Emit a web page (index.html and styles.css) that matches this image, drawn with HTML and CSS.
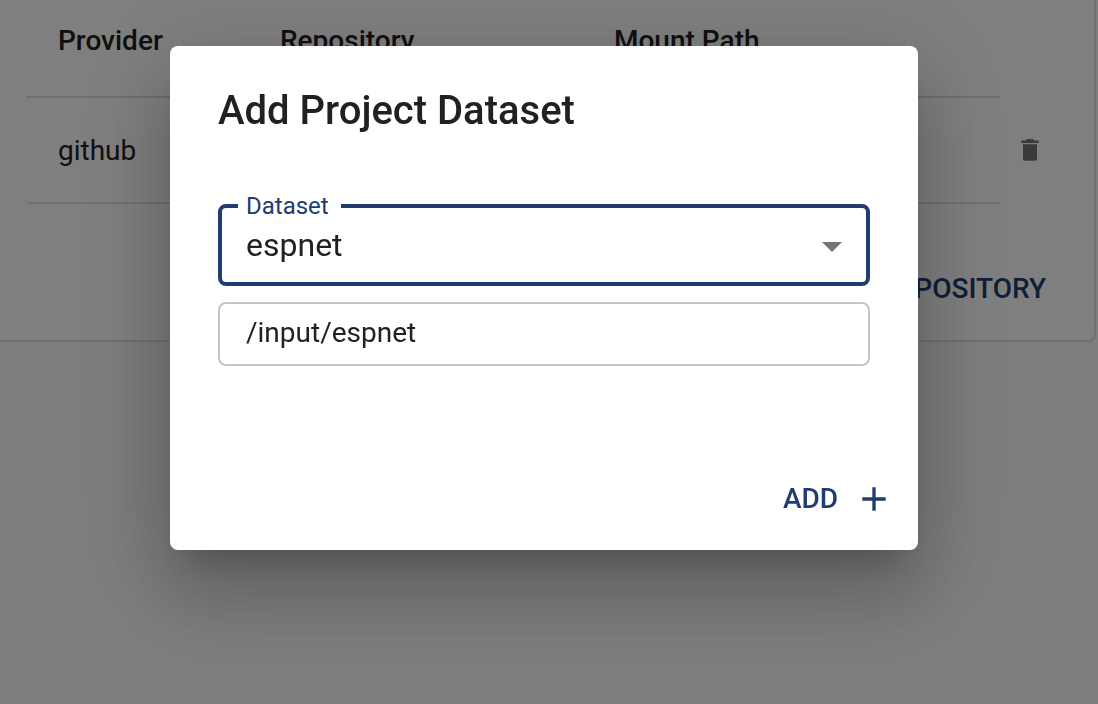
FILE: index.html
```html
<!DOCTYPE html>
<html lang="en">
<head>
  <meta charset="utf-8">
  <meta name="viewport" content="width=device-width, initial-scale=1">
  <title>Add Project Dataset</title>
  <link rel="stylesheet" href="styles.css">
</head>
<body>
  <main class="page" inert>
    <section class="card">
      <table class="repos">
        <colgroup>
          <col class="col-provider">
          <col class="col-repository">
          <col class="col-path">
          <col class="col-actions">
        </colgroup>
        <thead>
          <tr>
            <th scope="col">Provider</th>
            <th scope="col">Repository</th>
            <th scope="col">Mount Path</th>
            <td class="actions"></td>
          </tr>
        </thead>
        <tbody>
          <tr>
            <td>github</td>
            <td></td>
            <td></td>
            <td class="actions">
              <button class="icon-button" type="button" aria-label="Delete repository">
                <svg width="20" height="24" viewBox="0 0 20 24" fill="currentColor" aria-hidden="true">
                  <path d="M7 1h6l1.500 1.500H18.700V5H1.300V2.500H5.500zM3 6.200h14v14.800a1.700 1.700 0 0 1-1.700 1.700H4.700A1.700 1.700 0 0 1 3 21z"/>
                </svg>
              </button>
            </td>
          </tr>
        </tbody>
      </table>
      <div class="card-footer">
        <button class="text-button" type="button">ADD REPOSITORY</button>
      </div>
    </section>
  </main>

  <div class="backdrop">
    <form class="dialog" role="dialog" aria-modal="true" aria-labelledby="dialog-title">
      <h2 class="dialog-title" id="dialog-title">Add Project Dataset</h2>
      <div class="fields">
        <div class="select-field">
          <label class="select-label" for="dataset">Dataset</label>
          <select class="select" id="dataset">
            <option selected>espnet</option>
          </select>
          <svg class="select-arrow" width="20" height="10" viewBox="0 0 20 10" fill="currentColor" aria-hidden="true">
            <path d="M0 0h20L10 10z"/>
          </svg>
        </div>
        <input class="input" type="text" value="/input/espnet" aria-label="Mount path">
      </div>
      <div class="dialog-actions">
        <button class="text-button" type="button">
          ADD
          <svg width="40" height="40" viewBox="0 0 24 24" fill="currentColor" aria-hidden="true">
            <path d="M19 13h-6v6h-2v-6H5v-2h6V5h2v6h6z"/>
          </svg>
        </button>
      </div>
    </form>
  </div>
</body>
</html>
```
FILE: styles.css
```css
*,
*::before,
*::after {
  box-sizing: border-box;
}

body {
  margin: 0;
  background: #fafafa;
  color: #212121;
  font-family: Roboto, "Liberation Sans", sans-serif;
  font-size: 28px;
  line-height: 48px;
}

button,
input,
select {
  font: inherit;
  color: inherit;
}

.page {
  padding-right: 2px;
}

.card {
  background: #fff;
  border: 2px solid #e0e0e0;
  border-width: 0 2px 2px 0;
  border-radius: 0 0 8px 0;
  padding: 0 32px 16px 26px;
}

.repos {
  width: 100%;
  table-layout: fixed;
  border-collapse: separate;
  border-spacing: 0;
}

.col-provider {
  width: 222px;
}

.col-repository {
  width: 334px;
}

.col-actions {
  width: 62px;
}

.repos th,
.repos td {
  border-bottom: 2px solid #e0e0e0;
  text-align: left;
}

.repos th {
  padding: 17px 32px 31px;
  font-weight: 500;
}

.repos td {
  padding: 29px 32px 27px;
}

.repos tbody td:first-child {
  border-bottom-left-radius: 4px;
}

.repos .actions {
  padding: 0 2px 6px 0;
  border-bottom: 0;
  text-align: center;
}

.icon-button {
  display: inline-flex;
  padding: 0;
  border: 0;
  background: none;
  color: #757575;
  vertical-align: middle;
}

.card-footer {
  display: flex;
  justify-content: flex-end;
  padding-top: 48px;
}

.text-button {
  display: inline-flex;
  align-items: center;
  gap: 16px;
  padding: 13px 16px 11px;
  border: 0;
  border-radius: 8px;
  background: none;
  color: #213c70;
  font-weight: 500;
}

.backdrop {
  position: fixed;
  inset: 0;
  display: flex;
  align-items: flex-start;
  justify-content: center;
  padding: 46px 42px 32px 32px;
  background: rgba(0, 0, 0, 0.5);
}

.dialog {
  display: flex;
  flex-direction: column;
  width: 100%;
  max-width: 748px;
  background: #fff;
  border-radius: 8px;
  box-shadow:
    0 22px 30px -14px rgba(0, 0, 0, 0.2),
    0 48px 76px 6px rgba(0, 0, 0, 0.14),
    0 18px 92px 16px rgba(0, 0, 0, 0.12);
}

.dialog-title {
  margin: 0;
  padding: 33px 48px 31px;
  font-size: 40px;
  font-weight: 500;
  line-height: 64px;
}

.fields {
  display: flex;
  flex-direction: column;
  gap: 16px;
  padding: 30px 48px 80px;
}

.select-field {
  position: relative;
}

.select-label {
  position: absolute;
  top: -12px;
  left: 20px;
  padding: 0 12px 0 8px;
  background: #fff;
  color: #213c70;
  font-size: 24px;
  line-height: 28px;
}

.select {
  display: block;
  width: 100%;
  height: 82px;
  padding: 0 64px 0 24px;
  appearance: none;
  background: #fff;
  border: 4px solid #213c70;
  border-radius: 8px;
  outline: 0;
  font-size: 32px;
}

.select-arrow {
  position: absolute;
  top: 38px;
  right: 28px;
  color: #757575;
  pointer-events: none;
}

.input {
  width: 100%;
  height: 64px;
  padding: 0 26px 4px;
  background: #fff;
  border: 2px solid #c4c4c4;
  border-radius: 8px;
  outline: 0;
}

.dialog-actions {
  display: flex;
  justify-content: flex-end;
  padding: 16px 8px;
}
```
